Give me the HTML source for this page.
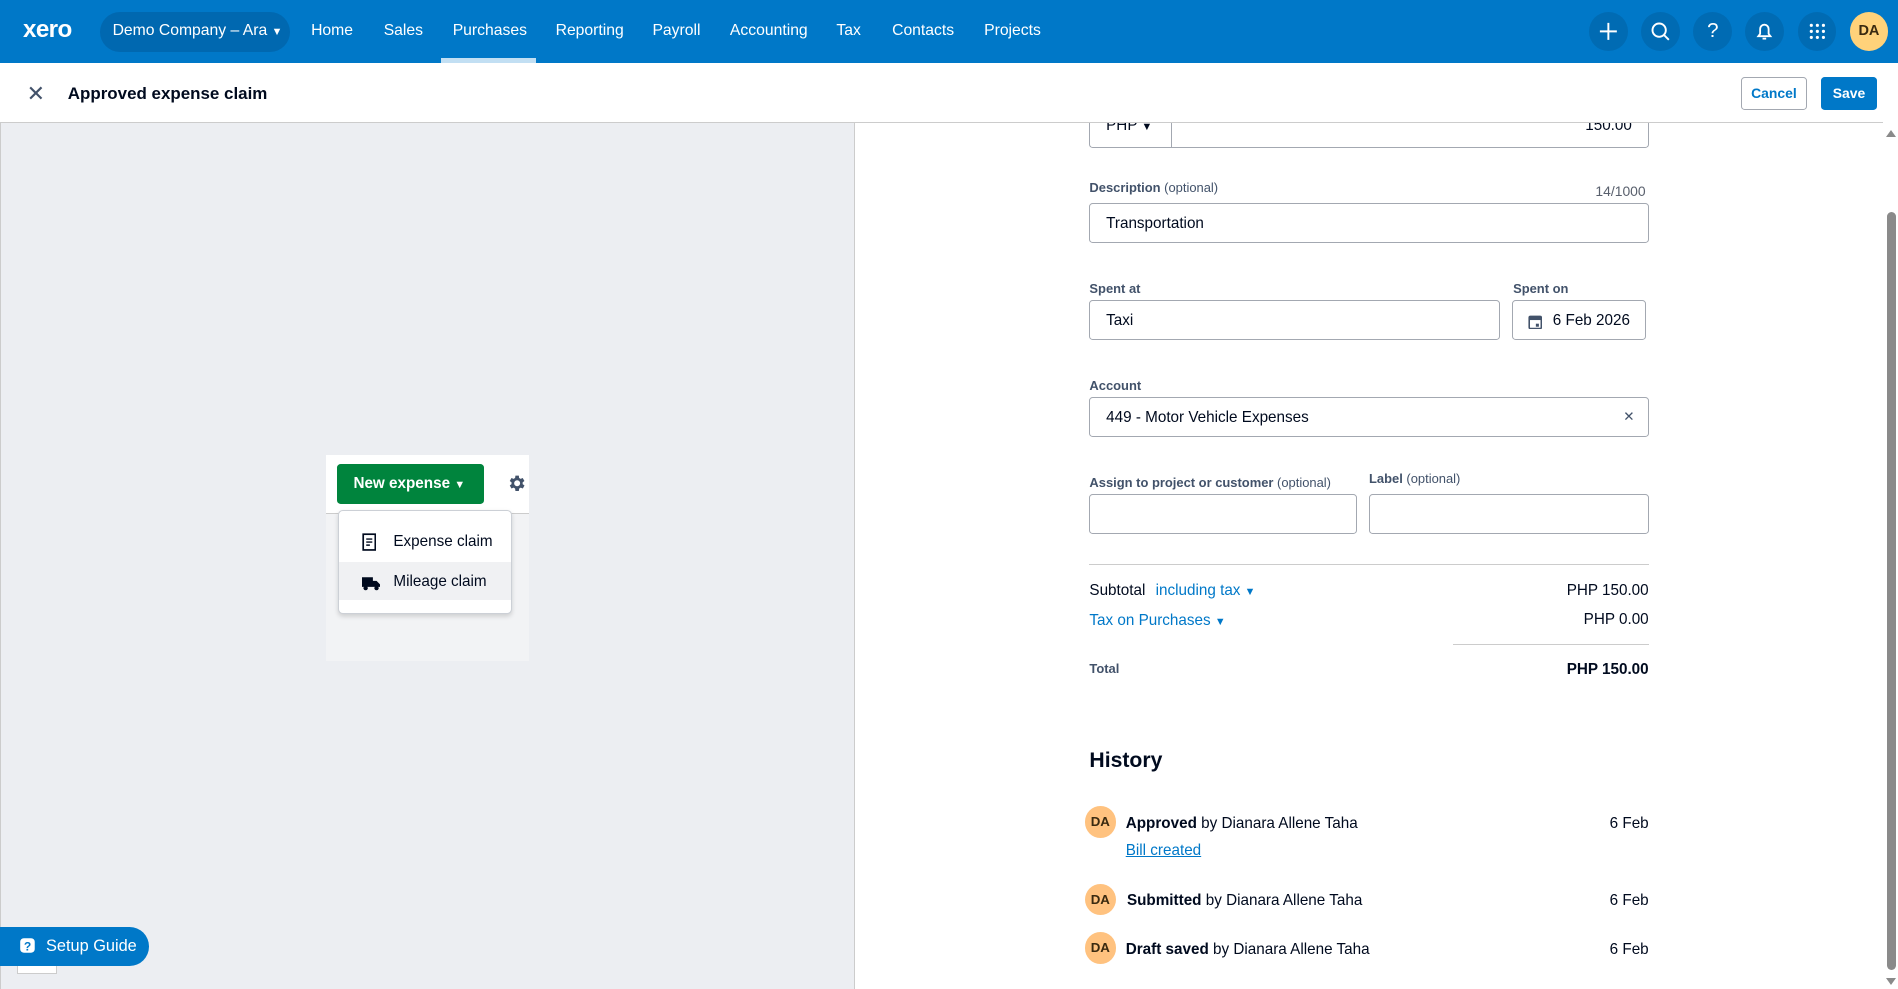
<!DOCTYPE html>
<html><head><meta charset="utf-8"><style>
*{box-sizing:border-box;margin:0;padding:0}
html,body{width:1898px;height:989px;overflow:hidden;background:#fff}
#w{position:absolute;left:0;top:0;width:1568px;height:817px;zoom:1.21046;font-family:"Liberation Sans",Arial,sans-serif;color:#000a1e;overflow:hidden}
.a{position:absolute;white-space:nowrap}
.nav{left:0;top:0;width:1568px;height:52px;background:#0078c8}
.ni{top:18px;color:#fff;font-size:13px}
.ic{top:10px;width:32px;height:32px;border-radius:50%;background:#006bb3}
.lbl{font-size:10.7px;font-weight:bold;color:#42526a}
.lbl span{font-weight:normal}
.inp{border:1px solid #a3a8b1;border-radius:3px;height:33px;background:#fff;font-size:12.6px;padding:9px 13px}
.t13{font-size:12.6px}
.av{width:26px;height:26px;border-radius:50%;background:#ffc27f;font-size:11px;font-weight:bold;text-align:center;line-height:26px;color:#3a2a10}
</style></head><body><div id="w">
<div class="a nav"></div>
<div class="a" style="left:19px;top:13px;color:#fff;font-size:20px;font-weight:bold;letter-spacing:-0.5px">xero</div>
<div class="a" style="left:83px;top:10px;width:157px;height:33px;border-radius:17px;background:#0068b0"></div>
<div class="a ni" style="left:93px">Demo Company – Ara <span style="font-size:9px">▼</span></div>
<div class="a ni" style="left:257px">Home</div>
<div class="a ni" style="left:317px">Sales</div>
<div class="a ni" style="left:374px">Purchases</div>
<div class="a" style="left:364px;top:48px;width:79px;height:4px;background:#c2dff3"></div>
<div class="a ni" style="left:459px">Reporting</div>
<div class="a ni" style="left:539px">Payroll</div>
<div class="a ni" style="left:603px">Accounting</div>
<div class="a ni" style="left:691px">Tax</div>
<div class="a ni" style="left:737px">Contacts</div>
<div class="a ni" style="left:813px">Projects</div>
<div class="a ic" style="left:1313px"><svg width="32" height="32"><path d="M16 9v14M9 16h14" stroke="#fff" stroke-width="1.6"/></svg></div>
<div class="a ic" style="left:1356px"><svg width="32" height="32"><circle cx="15" cy="15" r="5.5" fill="none" stroke="#fff" stroke-width="1.6"/><path d="M19 19l4 4" stroke="#fff" stroke-width="1.6"/></svg></div>
<div class="a ic" style="left:1399px;color:#fff;text-align:center;line-height:32px;font-size:17px">?</div>
<div class="a ic" style="left:1442px"><svg width="32" height="32"><path d="M11 20h10l-1.5-2v-4a3.5 3.5 0 0 0-7 0v4z" fill="none" stroke="#fff" stroke-width="1.5"/><path d="M14.5 22h3" stroke="#fff" stroke-width="1.5"/></svg></div>
<div class="a ic" style="left:1485px"><svg width="32" height="32" fill="#fff"><circle cx="11" cy="11" r="1.3"/><circle cx="16" cy="11" r="1.3"/><circle cx="21" cy="11" r="1.3"/><circle cx="11" cy="16" r="1.3"/><circle cx="16" cy="16" r="1.3"/><circle cx="21" cy="16" r="1.3"/><circle cx="11" cy="21" r="1.3"/><circle cx="16" cy="21" r="1.3"/><circle cx="21" cy="21" r="1.3"/></svg></div>
<div class="a" style="left:1528px;top:10px;width:32px;height:32px;border-radius:50%;background:#ffd27a;font-size:12px;font-weight:bold;text-align:center;line-height:32px;color:#3a2a10">DA</div>

<div class="a" style="left:0;top:102px;width:706px;height:715px;background:#eceef2;border-right:1px solid #ccc;border-left:1px solid #ccc"></div>
<div class="a" style="left:269px;top:376px;width:168px;height:170px;background:#f2f3f5"></div>
<div class="a" style="left:269px;top:376px;width:168px;height:49px;background:#fff;border-bottom:1px solid #ccc"></div>
<div class="a" style="left:278px;top:383px;width:122px;height:33px;background:#00843d;border-radius:3px;color:#fff;font-size:12.6px;font-weight:bold;line-height:33px;padding-left:14px">New expense <span style="font-size:9px">▼</span></div>
<div class="a" style="left:418px;top:391px"><svg width="17" height="17" viewBox="0 0 24 24"><path fill="#42526a" d="M19.4 13a7.5 7.5 0 0 0 0-2l2.1-1.6-2-3.5-2.5 1a7 7 0 0 0-1.7-1L15 3h-4l-.4 2.9a7 7 0 0 0-1.700 1l-2.5-1-2 3.5L6.5 11a7.5 7.5 0 0 0 0 2l-2.1 1.6 2 3.5 2.5-1a7 7 0 0 0 1.7 1L11 21h4l.4-2.9a7 7 0 0 0 1.7-1l2.5 1 2-3.5zM13 15.5a3.5 3.5 0 1 1 0-7 3.5 3.5 0 0 1 0 7z"/></svg></div>
<div class="a" style="left:279px;top:421px;width:144px;height:86px;background:#fff;border:1px solid #ccd0d6;border-radius:4px;box-shadow:0 2px 4px rgba(0,0,0,.15)"></div>
<div class="a" style="left:280px;top:464px;width:142px;height:32px;background:#f0f1f3"></div>
<div class="a" style="left:299px;top:440px"><svg width="12" height="15"><rect x="1" y="1" width="10" height="13" fill="none" stroke="#000a1e" stroke-width="1.4"/><path d="M3.5 5h5M3.5 7.5h5M3.5 10h3" stroke="#000a1e" stroke-width="1.2"/></svg></div>
<div class="a t13" style="left:325px;top:440px">Expense claim</div>
<div class="a" style="left:299px;top:474px"><svg width="15" height="12"><path d="M0 1h9v8H0zM9 4h3l3 3v2H9z" fill="#000a1e"/><circle cx="3" cy="10" r="1.8" fill="#000a1e"/><circle cx="12" cy="10" r="1.8" fill="#000a1e"/></svg></div>
<div class="a t13" style="left:325px;top:473px">Mileage claim</div>
<div class="a" style="left:14px;top:795px;width:33px;height:10px;background:#fff;border:1px solid #ccc"></div>
<div class="a" style="left:0;top:766px;width:123px;height:32px;background:#0078c8;border-radius:0 16px 16px 0;color:#fff;font-size:13.5px;line-height:32px;padding-left:38px">Setup Guide</div>
<div class="a" style="left:16px;top:774px"><svg width="16" height="16"><rect x="1" y="1" width="12" height="12" rx="3" fill="#fff"/><text x="4" y="11" font-size="10" font-weight="bold" fill="#0078c8" font-family="Liberation Sans">?</text></svg></div>

<div class="a" style="left:900px;top:90px;width:68px;height:32px;border:1px solid #a3a8b1;border-top:none;border-radius:0 0 0 3px;font-size:12.6px;padding:7px 13px">PHP <span style="font-size:9px">▼</span></div>
<div class="a" style="left:967px;top:90px;width:395px;height:32px;border:1px solid #a3a8b1;border-top:none;border-radius:0 0 3px 0;font-size:12.6px;text-align:right;padding:7px 13px">150.00</div>
<div class="a" style="left:0;top:52px;width:1556px;height:49px;background:#fff"></div>
<div class="a" style="left:0;top:101px;width:1556px;height:1px;background:#ccc"></div>
<div class="a" style="left:22px;top:67px;font-size:18px;color:#42526a">✕</div>
<div class="a" style="left:56px;top:69px;font-size:14px;font-weight:bold">Approved expense claim</div>
<div class="a" style="left:1438px;top:64px;width:55px;height:27px;border:1px solid #a3a8b1;border-radius:3px;color:#0078c8;font-size:11.5px;font-weight:bold;text-align:center;line-height:25px">Cancel</div>
<div class="a" style="left:1504px;top:64px;width:47px;height:27px;background:#0078c8;border-radius:3px;color:#fff;font-size:11.5px;font-weight:bold;text-align:center;line-height:27px">Save</div>

<div class="a lbl" style="left:900px;top:149px">Description <span>(optional)</span></div>
<div class="a" style="left:1318px;top:151px;font-size:11.5px;color:#59606d">14/1000</div>
<div class="a inp" style="left:900px;top:168px;width:462px">Transportation</div>
<div class="a lbl" style="left:900px;top:232px">Spent at</div>
<div class="a inp" style="left:900px;top:248px;width:339px">Taxi</div>
<div class="a lbl" style="left:1250px;top:232px">Spent on</div>
<div class="a inp" style="left:1249px;top:248px;width:111px;padding-left:33px">6 Feb 2026</div>
<div class="a" style="left:1262px;top:258px"><svg width="12" height="13"><rect x="1" y="2" width="10" height="10" rx="1" fill="none" stroke="#42526a" stroke-width="1.3"/><rect x="1" y="2" width="10" height="3" fill="#42526a"/><rect x="6.5" y="8" width="2.5" height="2.5" fill="#42526a"/></svg></div>
<div class="a lbl" style="left:900px;top:312px">Account</div>
<div class="a inp" style="left:900px;top:328px;width:462px">449 - Motor Vehicle Expenses</div>
<div class="a" style="left:1341px;top:338px;font-size:11px;color:#42526a">✕</div>
<div class="a lbl" style="left:900px;top:392px">Assign to project or customer <span>(optional)</span></div>
<div class="a inp" style="left:900px;top:408px;width:221px"></div>
<div class="a lbl" style="left:1131px;top:389px">Label <span>(optional)</span></div>
<div class="a inp" style="left:1131px;top:408px;width:231px"></div>
<div class="a" style="left:900px;top:466px;width:462px;height:1px;background:#ccc"></div>
<div class="a t13" style="left:900px;top:481px">Subtotal <span style="color:#0078c8;margin-left:5px">including tax <span style="font-size:9px">▼</span></span></div>
<div class="a t13" style="right:206px;top:481px">PHP 150.00</div>
<div class="a t13" style="left:900px;top:506px;color:#0078c8">Tax on Purchases <span style="font-size:9px">▼</span></div>
<div class="a t13" style="right:206px;top:505px">PHP 0.00</div>
<div class="a" style="left:1200px;top:532px;width:162px;height:1px;background:#ccc"></div>
<div class="a" style="left:900px;top:546px;font-size:10.7px;font-weight:bold;color:#42526a">Total</div>
<div class="a t13" style="right:206px;top:546px;font-weight:bold">PHP 150.00</div>
<div class="a" style="left:900px;top:619px;font-size:17.5px;font-weight:bold">History</div>
<div class="a av" style="left:896px;top:666px">DA</div>
<div class="a t13" style="left:930px;top:673px"><b>Approved</b> by Dianara Allene Taha</div>
<div class="a t13" style="right:206px;top:673px">6 Feb</div>
<div class="a t13" style="left:930px;top:696px;color:#0078c8;text-decoration:underline">Bill created</div>
<div class="a av" style="left:896px;top:730px">DA</div>
<div class="a t13" style="left:931px;top:737px"><b>Submitted</b> by Dianara Allene Taha</div>
<div class="a t13" style="right:206px;top:737px">6 Feb</div>
<div class="a av" style="left:896px;top:770px">DA</div>
<div class="a t13" style="left:930px;top:777px"><b>Draft saved</b> by Dianara Allene Taha</div>
<div class="a t13" style="right:206px;top:777px">6 Feb</div>

<div class="a" style="left:1556px;top:102px;width:12px;height:715px;background:#fff"></div>
<div class="a" style="left:1558px;top:107px;width:0;height:0;border-left:4.5px solid transparent;border-right:4.5px solid transparent;border-bottom:6px solid #8a8a8a"></div>
<div class="a" style="left:1559px;top:175px;width:7px;height:626px;border-radius:4px;background:#8a8a8a"></div>
<div class="a" style="left:1558px;top:808px;width:0;height:0;border-left:4.5px solid transparent;border-right:4.5px solid transparent;border-top:6px solid #8a8a8a"></div>
</div></body></html>
